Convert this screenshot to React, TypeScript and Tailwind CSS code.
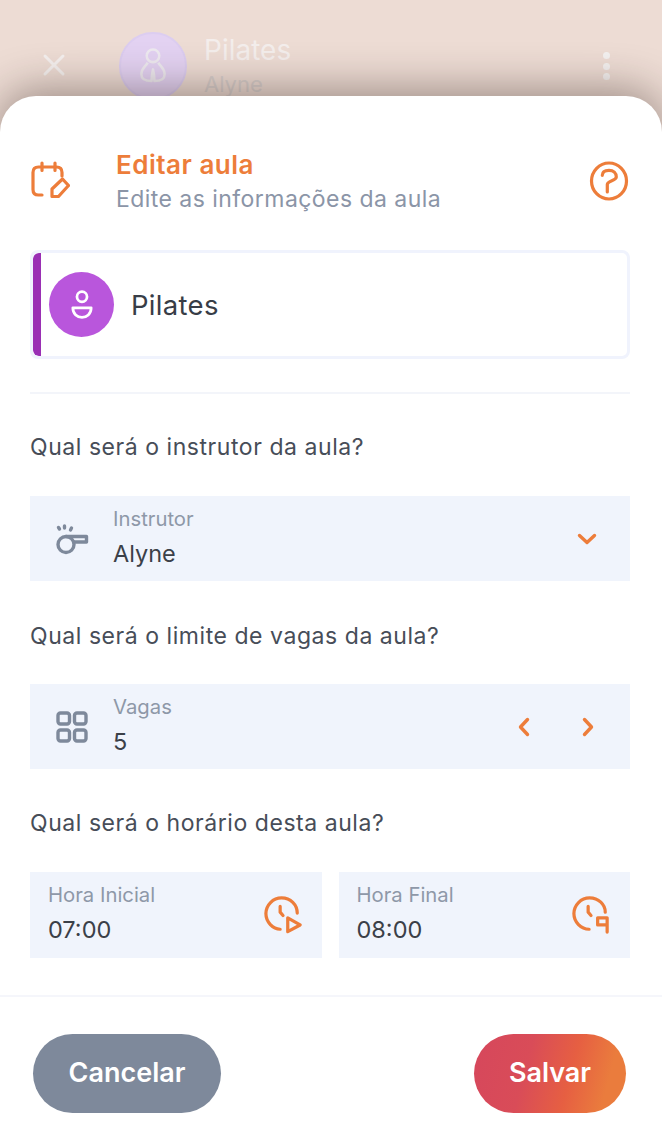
import type { ReactNode } from 'react'

const orange = '#ed7d3a'

function Question({ children }: { children: ReactNode }) {
  return <p className="text-[23px] leading-[28px] tracking-[0.55px] text-[#474d58]">{children}</p>
}

function Field({ icon, label, value, right }: { icon: ReactNode; label: string; value: string; right: ReactNode }) {
  return (
    <div className="flex h-[85px] items-center bg-[#f0f4fc]">
      <div className="flex w-[83px] justify-center">{icon}</div>
      <div className="flex-1 pb-[3px]">
        <p className="text-[20.3px] leading-[24px] text-[#8e98a8]">{label}</p>
        <p className="mt-[9px] text-[23.5px] leading-[28px] text-[#3b4048]">{value}</p>
      </div>
      {right}
    </div>
  )
}

function TimeField({ label, value, icon }: { label: string; value: string; icon: ReactNode }) {
  return (
    <div className="flex h-[86px] flex-1 items-center justify-between bg-[#f0f4fc] pl-[18px] pr-[20px]">
      <div className="pb-[3px]">
        <p className="text-[20.3px] leading-[24px] text-[#8e98a8]">{label}</p>
        <p className="mt-[9px] text-[23.5px] leading-[28px] text-[#3b4048]">{value}</p>
      </div>
      {icon}
    </div>
  )
}

function Chevron({ d, className }: { d: string; className?: string }) {
  return (
    <svg width="24" height="24" viewBox="0 0 24 24" fill="none" stroke={orange} strokeWidth="3.4" strokeLinecap="round" strokeLinejoin="round" className={className}>
      <path d={d} />
    </svg>
  )
}

export default function App() {
  return (
    <div className="flex h-[1148px] w-[662px] flex-col overflow-hidden bg-[#eddcd4] font-['Inter',sans-serif]">
      {/* fundo atrás do modal */}
      <div className="flex h-[96px] shrink-0 overflow-hidden pl-[42px] pr-[52px] pt-[32px]">
        <svg width="24" height="24" viewBox="0 0 24 24" fill="none" stroke="#f8f6f6" strokeWidth="3" strokeLinecap="round" className="mt-[21px] shrink-0 opacity-80">
          <path d="M3 3l18 18M21 3L3 21" />
        </svg>
        <div className="ml-[53px] flex h-[68px] w-[68px] shrink-0 items-center justify-center rounded-full border-[2px] border-[#dccdf0] bg-[#e3d2f2]">
          <svg width="32" height="38" viewBox="16 17 33 39" fill="none" stroke="#eeeaf0" strokeWidth="2.600" strokeLinejoin="round">
            <circle cx="32.500" cy="26" r="6.500" />
            <path d="M27 33C25 37 20.500 39 20.500 45C20.500 49.500 24 52 31 52C31 46 32 42 32.500 40C33 42 34 46 34 52C41 52 44.500 49.500 44.500 45C44.500 39 40 37 38 33" />
          </svg>
        </div>
        <div className="ml-[17px] flex-1">
          <p className="text-[28px] leading-[36px] text-[#f4eeec]">Pilates</p>
          <p className="text-[22px] leading-[32px] text-[#d8cfcc]">Alyne</p>
        </div>
        <div className="mt-[20px] flex flex-col gap-[3.5px]">
          <span className="h-[7px] w-[7px] rounded-full bg-[#f4f1f0]" />
          <span className="h-[7px] w-[7px] rounded-full bg-[#f4f1f0]" />
          <span className="h-[7px] w-[7px] rounded-full bg-[#f4f1f0]" />
        </div>
      </div>

      <div className="relative flex flex-1 flex-col rounded-t-[36px] bg-white shadow-[0_-6px_44px_rgba(40,25,20,0.42)]">
        <div className="flex-1 pl-[30px] pr-[32px]">
          {/* cabeçalho */}
          <div className="flex items-center pt-[54px]">
            <svg width="40" height="40" viewBox="0 0 40 40" fill="none" stroke={orange} strokeWidth="3.200" strokeLinecap="round" strokeLinejoin="round" className="mb-[3px] shrink-0">
              <path d="M12 34H8.500C5 34 3 32 3 28.500V11.500C3 8 5 6 8.500 6H26.500C30 6 32 8 32 11.500V15" />
              <path d="M12 2V9.500M25 2V9.500" />
              <path d="M22 28L32.500 18L38.500 24.500L28.500 35.500H22Z" />
            </svg>
            <div className="ml-[46px] flex-1">
              <p className="text-[26px] font-semibold leading-[30px] tracking-[0.5px] text-[#ed7d3a]">Editar aula</p>
              <p className="mt-[3px] text-[23px] leading-[32px] tracking-[0.45px] text-[#8b95a7]">Edite as informações da aula</p>
            </div>
            <svg width="40" height="40" viewBox="0 0 40 40" fill="none" stroke={orange} strokeWidth="3.200" strokeLinecap="round" strokeLinejoin="round" className="mb-[3px] mr-[1px] shrink-0">
              <ellipse cx="20" cy="20" rx="17.500" ry="18" />
              <path d="M13.300 14.300C13.300 11 16 9.300 20 9.300C24.500 9.300 27.300 12 27.300 16C27.300 20 18.300 19.500 18.300 23.500V31" />
            </svg>
          </div>

          {/* card da modalidade */}
          <div className="mt-[35px] flex h-[109px] overflow-hidden rounded-[8px] border-[3px] border-[#f0f3fd] bg-white">
            <div className="w-[8px] rounded-l-[6px] bg-[#9a2fb4]" />
            <div className="flex flex-1 items-center pl-[8px]">
              <div className="flex h-[65px] w-[65px] items-center justify-center rounded-full bg-[#b956dc]">
                <svg width="22" height="32" viewBox="0 0 24 32" fill="none" stroke="#fff" strokeWidth="3" strokeLinejoin="round">
                  <circle cx="12" cy="7" r="5.500" />
                  <path d="M2 19H22C22 26 17 29.500 12 29.500C7 29.500 2 26 2 19Z" />
                </svg>
              </div>
              <p className="ml-[17px] text-[27.5px] leading-[32px] tracking-[0.3px] text-[#383d47]">Pilates</p>
            </div>
          </div>

          <div className="mt-[33px] h-[2px] bg-[#f3f5fa]" />

          <div className="mt-[39px]">
            <Question>Qual será o instrutor da aula?</Question>
          </div>
          <div className="mt-[35px]">
            <Field
              label="Instrutor"
              value="Alyne"
              icon={
                <svg width="34" height="34" viewBox="0 0 34 34" fill="none" stroke="#7e899b" strokeWidth="3.400" strokeLinecap="round" strokeLinejoin="round">
                  <circle cx="11" cy="22.500" r="8" />
                  <path d="M11 14.500H31.500V20H19.500" />
                  <path d="M3.500 5.500L4.500 7M9.500 4V6M16.500 6L15.500 8" />
                </svg>
              }
              right={<Chevron d="M4.500 8.500L12 15.500L19.500 8.500" className="mr-[31px]" />}
            />
          </div>

          <div className="mt-[41px]">
            <Question>Qual será o limite de vagas da aula?</Question>
          </div>
          <div className="mt-[34px]">
            <Field
              label="Vagas"
              value="5"
              icon={
                <svg width="32" height="32" viewBox="0 0 32 32" fill="none" stroke="#7e899b" strokeWidth="3.400" strokeLinejoin="round">
                  <rect x="2" y="2" width="11.500" height="11" rx="2.500" />
                  <rect x="18.500" y="2" width="11.500" height="11" rx="2.500" />
                  <rect x="2" y="19" width="11.500" height="11" rx="2.500" />
                  <rect x="18.500" y="19" width="11.500" height="11" rx="2.500" />
                </svg>
              }
              right={
                <div className="mr-[30px] flex gap-[40px]">
                  <Chevron d="M15.500 4.500L8.500 12L15.500 19.500" />
                  <Chevron d="M8.500 4.500L15.500 12L8.500 19.500" />
                </div>
              }
            />
          </div>

          <div className="mt-[40px]">
            <Question>Qual será o horário desta aula?</Question>
          </div>
          <div className="mt-[35px] flex gap-[17px]">
            <TimeField
              label="Hora Inicial"
              value="07:00"
              icon={
                <svg width="38" height="38" viewBox="0 0 40 40" fill="none" stroke={orange} strokeWidth="3.400" strokeLinecap="round" strokeLinejoin="round">
                  <path d="M35 18C35 9 28 2 18.500 2C9.500 2 2 9.500 2 18.500C2 27.500 9.500 35 17 35" />
                  <path d="M17 11V17L20 20.500" />
                  <path d="M25 23L38 30.500L25 37.500Z" />
                </svg>
              }
            />
            <TimeField
              label="Hora Final"
              value="08:00"
              icon={
                <svg width="38" height="38" viewBox="0 0 40 40" fill="none" stroke={orange} strokeWidth="3.400" strokeLinecap="round" strokeLinejoin="round">
                  <path d="M35 17C35 9 28 2 18.500 2C9.500 2 2 9.500 2 18.500C2 27.500 9.500 35 18 35" />
                  <path d="M17 11V17L20 20.500" />
                  <path d="M37 23H27V30.500H37M37 23V38" />
                </svg>
              }
            />
          </div>
        </div>

        {/* rodapé */}
        <div className="flex h-[153px] shrink-0 items-start justify-between border-t-[2px] border-[#f5f6fb] pl-[33px] pr-[36px] pt-[37px]">
          <button className="flex h-[79px] w-[188px] items-center justify-center rounded-[40px] bg-[#7e899b] text-[27px] font-semibold text-white">
            Cancelar
          </button>
          <button className="flex h-[79px] w-[152px] items-center justify-center rounded-[40px] bg-[linear-gradient(105deg,#d6475c_0%,#d94c58_35%,#e65f42_62%,#ea7c3d_85%)] text-[27px] font-semibold text-white">
            Salvar
          </button>
        </div>
      </div>
    </div>
  )
}
